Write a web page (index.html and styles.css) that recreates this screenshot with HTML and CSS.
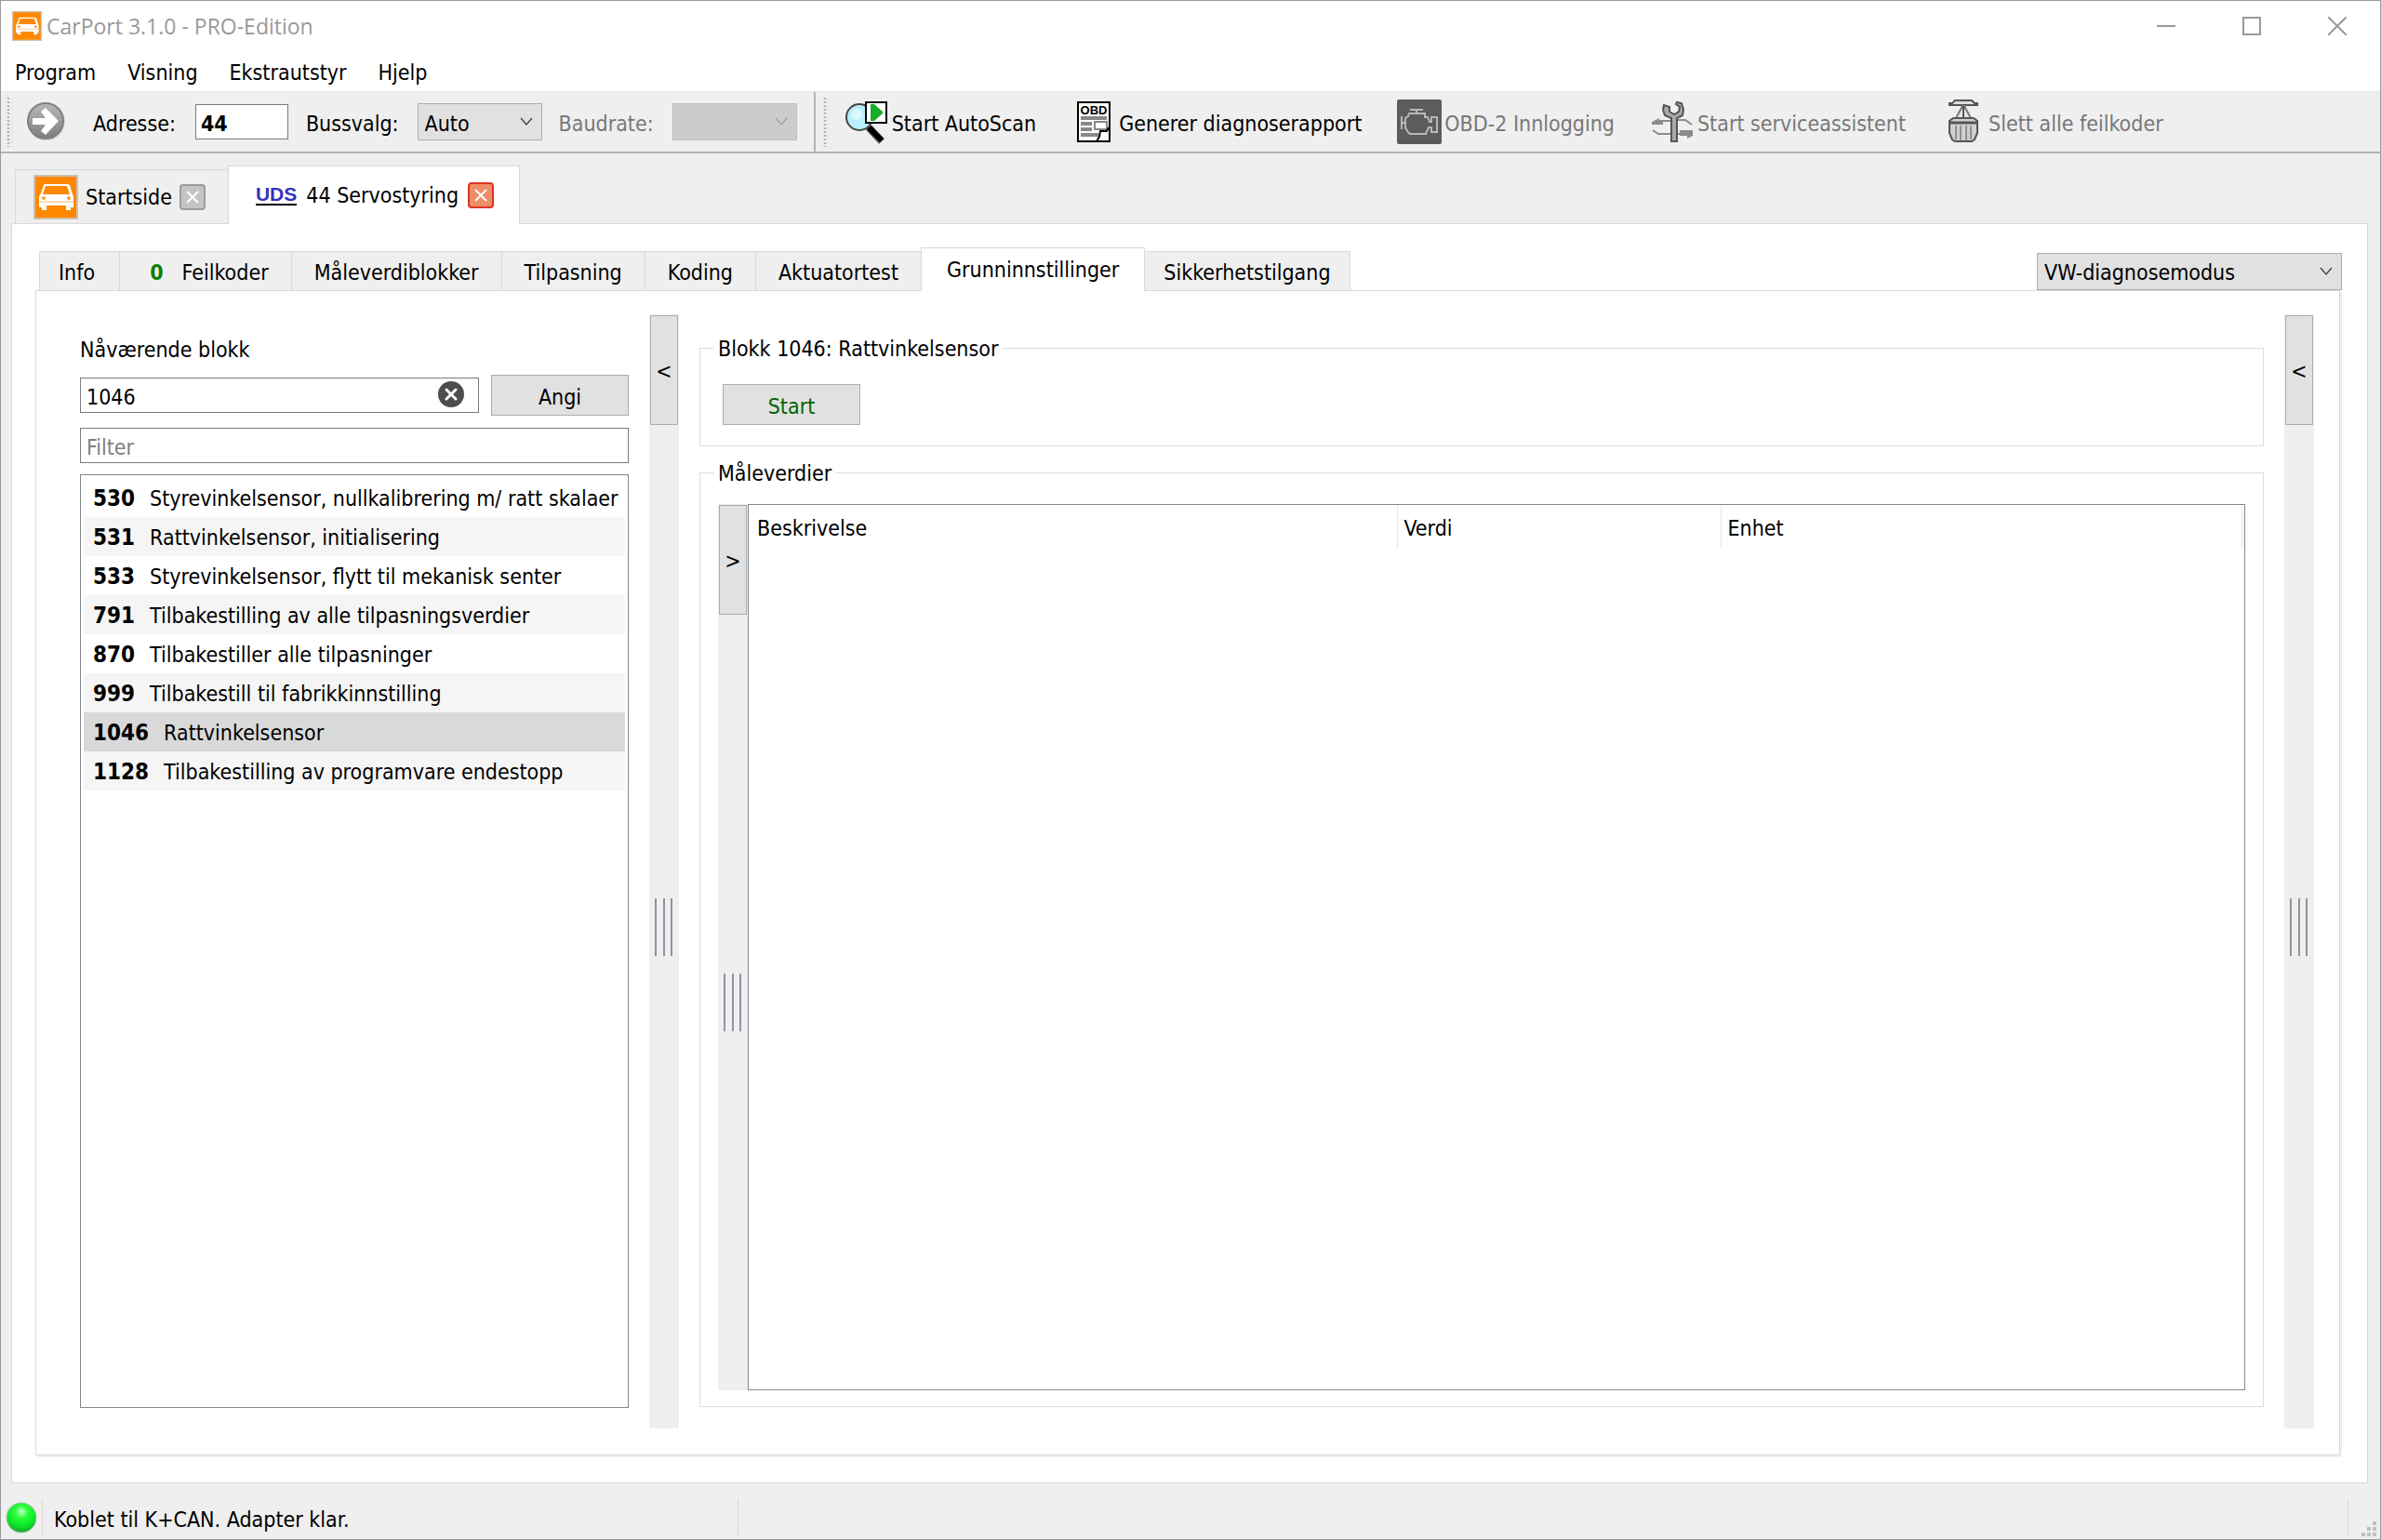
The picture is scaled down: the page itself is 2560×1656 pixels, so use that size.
FILE: index.html
```html
<!DOCTYPE html>
<html lang="no">
<head>
    <meta charset="UTF-8">
    <meta name="viewport" content="width=device-width, initial-scale=1.0">
    <title>CarPort 3.1.0 - PRO-Edition</title>
    <link rel="stylesheet" href="styles.css">
</head>
<body>
    <!-- Shared shapes -->
    <svg class="defs" width="0" height="0" aria-hidden="true">
        <symbol id="car" viewBox="0 0 48 48">
            <rect width="48" height="48" fill="#cfbfae"/>
            <rect x="2" y="2" width="44" height="44" fill="#ff8800"/>
            <path d="M12 10h25l2 1 3 10 1 2v12h-3v3h-5v-5H14v5H9v-3H6V23l2-3 3-9zM13 12l-3 9h29l-3-9z" fill="#fff" fill-rule="evenodd"/>
            <path d="M7 29h36" stroke="#ffd9b0" stroke-width="2"/>
            <circle cx="11" cy="25" r="2" fill="#ff9a2a"/>
            <circle cx="38" cy="25" r="2" fill="#ff9a2a"/>
        </symbol>
        <symbol id="chevron" viewBox="0 0 16 10">
            <path d="M2 1l6 7 6-7" fill="none" stroke="currentColor" stroke-width="1.4"/>
        </symbol>
        <symbol id="cross" viewBox="0 0 28 28">
            <rect x="1" y="1" width="26" height="26" rx="3" fill="var(--fill)" stroke="currentColor" stroke-width="2"/>
            <path d="M8 8l12 12M20 8L8 20" stroke="#fff" stroke-width="2"/>
        </symbol>
        <symbol id="grip" viewBox="0 0 20 62">
            <path d="M1 0v62M10 0v62M18 0v62" stroke="#8f949e" stroke-width="2"/>
        </symbol>
    </svg>

    <div class="window">
        <header class="title-bar">
            <svg class="app-icon"><use href="#car"/></svg>
            <h1>CarPort 3.1.0 - PRO-Edition</h1>
            <div class="window-buttons">
                <button type="button" aria-label="Minimer"><svg width="20" height="20"><path d="M0 10h20" stroke="#999" stroke-width="2"/></svg></button>
                <button type="button" aria-label="Maksimer"><svg width="20" height="20"><rect x="1" y="1" width="18" height="18" fill="none" stroke="#999" stroke-width="2"/></svg></button>
                <button type="button" aria-label="Lukk"><svg width="20" height="20"><path d="M0 0l20 20M20 0L0 20" stroke="#999" stroke-width="2"/></svg></button>
            </div>
        </header>

        <nav class="menu-bar">
            <button type="button">Program</button>
            <button type="button">Visning</button>
            <button type="button">Ekstrautstyr</button>
            <button type="button">Hjelp</button>
        </nav>

        <!-- Toolbar -->
        <div class="toolbars">
            <div class="toolbar connection">
                <span class="handle"></span>
                <button type="button" class="go" aria-label="Koble til">
                    <svg width="42" height="44" viewBox="0 0 42 44">
                        <defs>
                            <linearGradient id="go-fill" x1="0" y1="0" x2="0" y2="1">
                                <stop offset="0" stop-color="#b9b9b9"/>
                                <stop offset="1" stop-color="#7e7e7e"/>
                            </linearGradient>
                        </defs>
                        <circle cx="21" cy="22" r="20" fill="#d8d8d8"/>
                        <circle cx="20" cy="21" r="19" fill="url(#go-fill)" stroke="#808080" stroke-width="2"/>
                        <path d="M6 18h14l-5-7 5-4 14 14-14 15-5-4 5-7H6z" fill="#fff"/>
                    </svg>
                </button>
                <label for="address">Adresse:</label>
                <input type="text" id="address" class="address" value="44">
                <label for="bus">Bussvalg:</label>
                <div class="select">
                    <select id="bus"><option>Auto</option></select>
                    <svg class="arrow"><use href="#chevron"/></svg>
                </div>
                <label for="baud" class="muted">Baudrate:</label>
                <div class="select disabled">
                    <select id="baud" disabled><option></option></select>
                    <svg class="arrow"><use href="#chevron"/></svg>
                </div>
            </div>
            <div class="toolbar actions">
                <span class="handle"></span>
                <button type="button">
                    <svg width="48" height="48" viewBox="0 0 48 48">
                        <path d="M26 30l14 15" stroke="#555" stroke-width="8"/>
                        <path d="M26 30l14 14" stroke="#000" stroke-width="6"/>
                        <circle cx="16" cy="19" r="14" fill="#b9effc" stroke="#444" stroke-width="2"/>
                        <circle cx="13" cy="16" r="6" fill="#dcf8ff"/>
                        <rect x="23" y="3" width="22" height="22" fill="#fff" stroke="#000" stroke-width="2"/>
                        <path d="M28 5v18h4l9-8v-2l-9-8z" fill="#17ad2b"/>
                    </svg>
                    <span>Start AutoScan</span>
                </button>
                <button type="button">
                    <svg width="48" height="48" viewBox="0 0 48 48">
                        <rect x="7" y="3" width="34" height="42" fill="#fff" stroke="#000" stroke-width="2"/>
                        <text x="24" y="16" class="obd-text">OBD</text>
                        <path d="M10 20h28M10 26h12M10 32h12M10 38h19" stroke="#888" stroke-width="4"/>
                        <rect x="25" y="24" width="13" height="8" fill="#fff" stroke="#888" stroke-width="2"/>
                        <path d="M27 45l3-5 1-6h7l2-4v14H27z" fill="#fff"/>
                        <path d="M27 45l3-5 1-6h7l2-4" fill="none" stroke="#000" stroke-width="2"/>
                    </svg>
                    <span>Generer diagnoserapport</span>
                </button>
                <button type="button" disabled>
                    <svg width="48" height="48" viewBox="0 0 48 48">
                        <rect width="48" height="48" rx="2" fill="#5c5c5c"/>
                        <path d="M14 11h14M21 11v4M13 15h17v4h3l2 5h2v-5h6v16h-6v-5h-3l-3 7H14l-3-3-2-4V20l3-2zM5 18v14M5 25h4" fill="none" stroke="#b8b8b8" stroke-width="2"/>
                    </svg>
                    <span>OBD-2 Innlogging</span>
                </button>
                <button type="button" disabled>
                    <svg width="48" height="48" viewBox="0 0 48 48">
                        <path d="M2 24l8-4v2h13v2h-9v3H2zM32 33h14v6l-6 3v-3h-8z" fill="#8c8c8c"/>
                        <path d="M29 22h9l7 5M3 33l6 4h29" fill="none" stroke="#8c8c8c" stroke-width="2"/>
                        <path d="M15 6l-1 5 2 6 7 3v25h6V20l6-3 1-6-2-7-5-1-1 2 4 3-1 5-5 3-5-3V8z" fill="#a9a9a9" stroke="#555" stroke-width="2"/>
                    </svg>
                    <span>Start serviceassistent</span>
                </button>
                <button type="button" disabled>
                    <svg width="48" height="48" viewBox="0 0 48 48">
                        <path d="M9 6V4h3l3-3h18l3 3h3v2z" fill="#ddd" stroke="#555" stroke-width="2"/>
                        <path d="M23 7l-7 13h16L25 7z" fill="#e4e4e4" stroke="#777" stroke-width="2"/>
                        <path d="M24 7v13" stroke="#555" stroke-width="2"/>
                        <path d="M9 23l4-3h22l4 3v13l-3 7-3 2H15l-3-2-3-7z" fill="#d0d0d0" stroke="#555" stroke-width="2"/>
                        <path d="M10 25h28" stroke="#555" stroke-width="3"/>
                        <path d="M16 28v15M21 28v16M27 28v16M32 28v15" stroke="#909090" stroke-width="2"/>
                    </svg>
                    <span>Slett alle feilkoder</span>
                </button>
            </div>
        </div>

        <!-- Open documents -->
        <div class="doc-tabs" role="tablist">
            <div class="doc-tab">
                <svg class="doc-icon"><use href="#car"/></svg>
                <button type="button" role="tab">Startside</button>
                <button type="button" class="close" aria-label="Lukk Startside"><svg><use href="#cross"/></svg></button>
            </div>
            <div class="doc-tab active">
                <span class="uds">UDS</span>
                <button type="button" role="tab" aria-selected="true">44 Servostyring</button>
                <button type="button" class="close" aria-label="Lukk 44 Servostyring"><svg><use href="#cross"/></svg></button>
            </div>
        </div>

        <main class="doc-pane">
            <div class="page-bar">
                <div class="page-tabs" role="tablist">
                    <button type="button" role="tab">Info</button>
                    <button type="button" role="tab" class="faults"><b>0</b>Feilkoder</button>
                    <button type="button" role="tab">Måleverdiblokker</button>
                    <button type="button" role="tab">Tilpasning</button>
                    <button type="button" role="tab">Koding</button>
                    <button type="button" role="tab">Aktuatortest</button>
                    <button type="button" role="tab" class="active" aria-selected="true">Grunninnstillinger</button>
                    <button type="button" role="tab">Sikkerhetstilgang</button>
                </div>
                <div class="select mode">
                    <select aria-label="Diagnosemodus"><option>VW-diagnosemodus</option></select>
                    <svg class="arrow"><use href="#chevron"/></svg>
                </div>
            </div>

            <div class="page">
                <!-- Block list -->
                <section class="blocks">
                    <label for="block">Nåværende blokk</label>
                    <form class="block-form">
                        <div class="clearable">
                            <input type="text" id="block" value="1046">
                            <button type="button" class="clear" aria-label="Tøm">
                                <svg width="28" height="28" viewBox="0 0 28 28">
                                    <circle cx="14" cy="14" r="14" fill="#4d4d4d"/>
                                    <path d="M9 9l10 10M19 9L9 19" stroke="#fff" stroke-width="3" stroke-linecap="round"/>
                                </svg>
                            </button>
                        </div>
                        <button type="button" class="button">Angi</button>
                    </form>
                    <input type="text" class="filter" placeholder="Filter" aria-label="Filter">
                    <ul class="block-list">
                        <li><b>530</b>Styrevinkelsensor, nullkalibrering m/ ratt skalaer</li>
                        <li><b>531</b>Rattvinkelsensor, initialisering</li>
                        <li><b>533</b>Styrevinkelsensor, flytt til mekanisk senter</li>
                        <li><b>791</b>Tilbakestilling av alle tilpasningsverdier</li>
                        <li><b>870</b>Tilbakestiller alle tilpasninger</li>
                        <li><b>999</b>Tilbakestill til fabrikkinnstilling</li>
                        <li class="selected"><b>1046</b>Rattvinkelsensor</li>
                        <li><b>1128</b>Tilbakestilling av programvare endestopp</li>
                    </ul>
                </section>

                <div class="splitter">
                    <button type="button">&lt;</button>
                    <div class="grip"><svg><use href="#grip"/></svg></div>
                </div>

                <section class="details">
                    <fieldset>
                        <legend>Blokk 1046: Rattvinkelsensor</legend>
                        <div class="block-actions">
                            <button type="button" class="button start">Start</button>
                        </div>
                    </fieldset>
                    <fieldset class="values">
                        <legend>Måleverdier</legend>
                        <div class="values-body">
                            <div class="splitter">
                                <button type="button">&gt;</button>
                                <div class="grip"><svg><use href="#grip"/></svg></div>
                            </div>
                            <div class="table-box">
                                <table>
                                    <thead>
                                        <tr>
                                            <th class="col-description">Beskrivelse</th>
                                            <th class="col-value">Verdi</th>
                                            <th>Enhet</th>
                                        </tr>
                                    </thead>
                                </table>
                            </div>
                        </div>
                    </fieldset>
                </section>

                <div class="splitter">
                    <button type="button">&lt;</button>
                    <div class="grip"><svg><use href="#grip"/></svg></div>
                </div>
            </div>
        </main>

        <footer class="status-bar">
            <svg class="led" viewBox="0 0 32 32">
                <defs>
                    <radialGradient id="led-fill" cx="0.5" cy="0.3" r="0.7">
                        <stop offset="0" stop-color="#c8ffc8"/>
                        <stop offset="0.3" stop-color="#2cff3a"/>
                        <stop offset="0.7" stop-color="#0be52a"/>
                        <stop offset="1" stop-color="#17a52c"/>
                    </radialGradient>
                </defs>
                <circle cx="16" cy="16" r="15" fill="url(#led-fill)" stroke="#9ec7a2" stroke-width="1"/>
            </svg>
            <p class="status-text">Koblet til K+CAN. Adapter klar.</p>
            <div class="status-space"></div>
            <svg class="size-grip" width="16" height="16"><path d="M12 0h4v4h-4zM6 6h4v4H6zM12 6h4v4h-4zM0 12h4v4H0zM6 12h4v4H6zM12 12h4v4h-4z" fill="#bfbfbf"/></svg>
        </footer>
    </div>
</body>
</html>
```

FILE: styles.css
```css
* {
    margin: 0;
    padding: 0;
    box-sizing: border-box;
}

body {
    font-family: "DejaVu Sans Condensed", "Open Sans", sans-serif;
    font-size: 23px;
    line-height: 32px;
    color: #000;
    background-color: #efefef;
}

button,
input,
select {
    font: inherit;
    color: inherit;
    background: none;
    border: none;
    border-radius: 0;
    outline: none;
    white-space: nowrap;
}

svg {
    display: block;
    flex: none;
}

.defs {
    position: absolute;
}

.window {
    display: flex;
    flex-direction: column;
    height: 100vh;
    border: 1px solid #9a9a9e;
}

/* Title bar and menu */
.title-bar {
    display: flex;
    align-items: center;
    height: 53px;
    padding-left: 12px;
    background-color: #fff;
}

.app-icon {
    width: 32px;
    height: 32px;
}

.title-bar h1 {
    flex: 1;
    margin-left: 5px;
    font-family: "Open Sans", sans-serif;
    font-size: 23px;
    font-weight: normal;
    color: #999;
}

.window-buttons {
    display: flex;
}

.window-buttons button {
    display: flex;
    align-items: center;
    justify-content: center;
    width: 92px;
    height: 50px;
}

.menu-bar {
    display: flex;
    gap: 34px;
    height: 44px;
    padding: 3px 0 0 15px;
    background-color: #fff;
}

/* Toolbar */
.toolbars {
    display: flex;
    height: 67px;
    background-color: #efefef;
    border-top: 1px solid #e8e8e8;
    border-bottom: 2px solid #b4b4b4;
}

.toolbar {
    display: flex;
    align-items: center;
}

.toolbar label,
.actions button span {
    padding-top: 3px;
}

.connection {
    padding: 0 18px 0 5px;
    border-right: 2px solid #b4b4b4;
}

.actions {
    flex: 1;
    padding-left: 7px;
}

.handle {
    width: 8px;
    height: 54px;
    background-image: radial-gradient(#b4b4b4 1px, transparent 2px);
    background-size: 6px 4px;
}

.go {
    margin: 0 29px 0 15px;
}

.address {
    width: 100px;
    height: 38px;
    margin: 0 19px 0 21px;
    padding: 4px 5px 0;
    font-weight: bold;
    background-color: #fff;
    border: 1px solid #7a7a7a;
}

.select {
    position: relative;
    width: 134px;
    height: 40px;
    margin: 0 18px 0 20px;
}

.select select {
    width: 100%;
    height: 100%;
    padding: 2px 7px 0;
    appearance: none;
    background-color: #e1e1e1;
    border: 1px solid #adadad;
}

.connection .select select {
    padding-top: 4px;
}

.select .arrow {
    position: absolute;
    top: 15px;
    right: 9px;
    width: 16px;
    height: 10px;
    color: #444;
}

.select.disabled {
    margin-right: 0;
}

.select.disabled select {
    background-color: #cccccc;
    border-color: #bfbfbf;
    opacity: 1;
}

.select.disabled .arrow {
    color: #a0a0a0;
}

.muted {
    color: #787878;
}

.actions button {
    display: flex;
    align-items: center;
    gap: 3px;
    margin-right: 38px;
}

.actions button:first-of-type {
    margin-left: 16px;
}

.actions button:disabled {
    color: #787878;
}

.obd-text {
    font-family: "Liberation Sans", sans-serif;
    font-size: 13px;
    font-weight: bold;
    text-anchor: middle;
}

/* Document tabs */
.doc-tabs {
    display: flex;
    align-items: flex-end;
    height: 75px;
    padding-left: 15px;
}

.doc-tab {
    display: flex;
    align-items: center;
    gap: 8px;
    height: 58px;
    padding: 0 24px 0 19px;
    border: 1px solid #d9d9d9;
    border-right: none;
    border-bottom: none;
    --fill: #c4c4c4;
    color: #000;
}

.doc-tab.active {
    position: relative;
    gap: 10px;
    height: 63px;
    margin-bottom: -1px;
    padding: 0 27px 0 29px;
    background-color: #fff;
    border-right: 1px solid #d9d9d9;
    --fill: #ee8d66;
}

.doc-icon {
    width: 48px;
    height: 48px;
}

.close {
    color: #9c9c9c;
}

.active .close {
    color: #dd3322;
}

.close svg {
    width: 28px;
    height: 28px;
}

.uds {
    font-family: "Liberation Sans", sans-serif;
    font-size: 21px;
    font-weight: bold;
    line-height: 20px;
    color: #3333bb;
    border-bottom: 2px solid #000;
}

.doc-pane {
    display: flex;
    flex: 1;
    flex-direction: column;
    min-height: 0;
    margin: 0 13px 0 11px;
    padding: 25px 27px 29px 25px;
    background-color: #fff;
    border: 1px solid #d9d9d9;
}

/* Page tabs */
.page-bar {
    display: flex;
    align-items: flex-end;
    justify-content: space-between;
    height: 46px;
    padding-left: 4px;
}

.page-tabs {
    display: flex;
    align-items: flex-end;
}

.page-tabs button {
    height: 42px;
    padding: 2px 24px 0;
    background-color: #efefef;
    border: 1px solid #d9d9d9;
    border-right: none;
    border-bottom: none;
}

.page-tabs button:first-child {
    padding: 2px 26px 0 20px;
}

.page-tabs button:last-child {
    padding: 2px 20px 0;
    border-right: 1px solid #d9d9d9;
    border-left: none;
}

.page-tabs .faults {
    padding-left: 32px;
}

.faults b {
    margin-right: 20px;
    color: #0a800a;
}

.page-tabs .active {
    position: relative;
    height: 47px;
    margin-bottom: -1px;
    padding: 0 27px;
    background-color: #fff;
    border-right: 1px solid #d9d9d9;
}

.mode {
    width: 328px;
    margin: 0;
}

.page {
    display: flex;
    flex: 1;
    gap: 22px;
    min-height: 0;
    margin-right: 2px;
    padding: 25px 27px 28px 47px;
    border: 1px solid #d9d9d9;
    box-shadow: 2px 2px #efefef;
}

/* Block list */
.blocks {
    display: flex;
    flex: 0 0 590px;
    flex-direction: column;
    padding: 22px 0;
}

.block-form {
    display: flex;
    align-items: center;
    gap: 13px;
    margin: 11px 0 13px;
}

.clearable {
    position: relative;
    flex: 1;
}

.blocks input {
    width: 100%;
    height: 38px;
    padding: 4px 6px 0;
    border: 1px solid #7a7a7a;
}

.blocks input::placeholder {
    color: #808080;
    opacity: 1;
}

.clear {
    position: absolute;
    top: 4px;
    right: 16px;
}

.button {
    width: 148px;
    height: 44px;
    padding-top: 3px;
    background-color: #e1e1e1;
    border: 1px solid #adadad;
}

.blocks .filter {
    flex: none;
}

.block-list {
    flex: 1;
    margin-top: 12px;
    padding: 3px;
    border: 1px solid #828790;
    list-style-type: none;
}

.block-list li {
    height: 42px;
    padding-left: 10px;
    line-height: 44px;
    white-space: nowrap;
}

.block-list li:nth-child(even) {
    background-color: #f5f5f5;
}

.block-list li.selected {
    background-color: #d9d9d9;
}

.block-list b {
    margin-right: 16px;
    font-size: 24px;
}

/* Splitters */
.splitter {
    display: flex;
    flex: 0 0 32px;
    flex-direction: column;
    padding: 1px 1px 0;
    background-color: #efefef;
}

.splitter button {
    height: 118px;
    padding-top: 2px;
    background-color: #e1e1e1;
    border: 1px solid #adadad;
}

.grip {
    display: flex;
    flex: 1;
    align-items: center;
    justify-content: center;
}

.grip svg {
    width: 20px;
    height: 62px;
}

/* Details */
.details {
    display: flex;
    flex: 1;
    flex-direction: column;
    gap: 12px;
    padding: 20px 0 23px;
}

fieldset {
    padding: 0 19px;
    border: 1px solid #dcdcdc;
}

legend {
    margin-left: -5px;
    padding: 1px 5px 0;
}

.block-actions {
    padding: 22px 5px;
}

.start {
    color: #006400;
}

.values {
    display: flex;
    flex: 1;
    flex-direction: column;
}

.values-body {
    display: flex;
    flex: 1;
    padding: 17px 0;
}

.table-box {
    flex: 1;
    padding: 1px 2px;
    border: 1px solid #828790;
}

table {
    width: 100%;
    border-collapse: collapse;
    table-layout: fixed;
}

th {
    height: 46px;
    padding: 2px 7px 0;
    font-weight: normal;
    text-align: left;
    border-right: 1px solid #e5e5e5;
}

.col-description {
    width: 695px;
}

.col-value {
    width: 348px;
}

/* Status bar */
.status-bar {
    display: flex;
    align-items: center;
    height: 60px;
    padding: 14px 4px 0 5px;
}

.led {
    width: 34px;
    height: 34px;
}

.status-text {
    width: 749px;
    margin-left: 5px;
    padding: 6px 0 2px 12px;
    border: solid #d9d9d9;
    border-width: 0 1px;
}

.status-space {
    flex: 1;
    height: 40px;
    border-right: 1px solid #d9d9d9;
}

.size-grip {
    align-self: flex-end;
    margin: 0 0 3px 14px;
}
```
